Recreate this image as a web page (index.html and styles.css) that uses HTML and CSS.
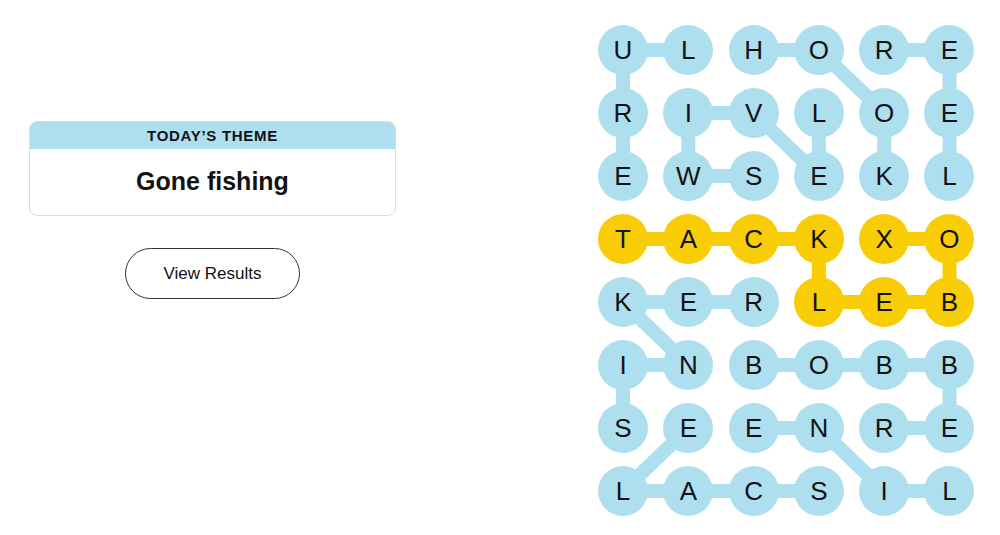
FILE: index.html
```html
<!DOCTYPE html>
<html lang="en">
<head>
    <meta charset="UTF-8">
    <meta name="viewport" content="width=device-width, initial-scale=1.0">
    <title>Strands</title>
    <link rel="stylesheet" href="styles.css">
</head>
<body>
    <div class="page">
        <div class="intro">
            <div class="theme-card">
                <div class="theme-label">Today&rsquo;s Theme</div>
                <div class="theme-name">Gone fishing</div>
            </div>
            <button class="results-btn">View Results</button>
        </div>

        <div class="board">
            <!-- connectors between found letters -->
            <svg class="paths" viewBox="0 0 376.5 491" width="376.5" height="491">
                <polyline class="found" points="90.3,25 25,25 25,151" />
                <polyline class="found" points="155.6,25 220.9,25 286.2,88 286.2,151" />
                <polyline class="found" points="286.2,25 351.5,25 351.5,151" />
                <polyline class="found" points="155.6,151 90.3,151 90.3,88 155.6,88 220.9,151 220.9,88" />
                <polyline class="spangram" points="25,214 220.9,214 220.9,277 351.5,277 351.5,214 286.2,214" />
                <polyline class="found" points="25,403 25,340 90.3,340 25,277 90.3,277 155.6,277" />
                <polyline class="found" points="155.6,340 351.5,340 351.5,403 286.2,403" />
                <polyline class="found" points="220.9,466 25,466 90.3,403" />
                <polyline class="found" points="351.5,466 286.2,466 220.9,403 155.6,403" />
            </svg>

            <div class="grid">
                <div class="cell">U</div><div class="cell">L</div><div class="cell">H</div><div class="cell">O</div><div class="cell">R</div><div class="cell">E</div>
                <div class="cell">R</div><div class="cell">I</div><div class="cell">V</div><div class="cell">L</div><div class="cell">O</div><div class="cell">E</div>
                <div class="cell">E</div><div class="cell">W</div><div class="cell">S</div><div class="cell">E</div><div class="cell">K</div><div class="cell">L</div>
                <div class="cell span">T</div><div class="cell span">A</div><div class="cell span">C</div><div class="cell span">K</div><div class="cell span">X</div><div class="cell span">O</div>
                <div class="cell">K</div><div class="cell">E</div><div class="cell">R</div><div class="cell span">L</div><div class="cell span">E</div><div class="cell span">B</div>
                <div class="cell">I</div><div class="cell">N</div><div class="cell">B</div><div class="cell">O</div><div class="cell">B</div><div class="cell">B</div>
                <div class="cell">S</div><div class="cell">E</div><div class="cell">E</div><div class="cell">N</div><div class="cell">R</div><div class="cell">E</div>
                <div class="cell">L</div><div class="cell">A</div><div class="cell">C</div><div class="cell">S</div><div class="cell">I</div><div class="cell">L</div>
            </div>
        </div>
    </div>
</body>
</html>
```

FILE: styles.css
```css
body {
    margin: 0;
    padding: 0;
    font-family: "Liberation Sans", Arial, sans-serif;
    background: #fff;
    color: #121212;
}

.page {
    display: flex;
    align-items: flex-start;
    padding: 25px 0 0 29px;
}

.intro {
    width: 367px;
    margin-top: 96px;
    display: flex;
    flex-direction: column;
    align-items: center;
}

.theme-card {
    width: 100%;
    box-sizing: border-box;
    border: 1px solid #dcdcdc;
    border-radius: 8px;
    overflow: hidden;
}

.theme-label {
    height: 27px;
    line-height: 28px;
    background: #aedfee;
    text-align: center;
    text-transform: uppercase;
    font-size: 15px;
    font-weight: bold;
    letter-spacing: 0.7px;
}

.theme-name {
    height: 66px;
    line-height: 64px;
    text-align: center;
    font-size: 25px;
    font-weight: bold;
}

.results-btn {
    margin-top: 32px;
    width: 175px;
    height: 51px;
    border: 1px solid #333;
    border-radius: 26px;
    background: #fff;
    color: #121212;
    font-family: "Liberation Sans", Arial, sans-serif;
    font-size: 17px;
    cursor: pointer;
}

.board {
    position: relative;
    margin-left: 202px;
}

.paths {
    position: absolute;
    top: 0;
    left: 0;
    z-index: 0;
}

.paths polyline {
    fill: none;
    stroke-width: 14;
    stroke-linejoin: round;
}

.paths .found {
    stroke: #aedfee;
}

.paths .spangram {
    stroke: #f8cd05;
}

.grid {
    position: relative;
    z-index: 1;
    display: grid;
    grid-template-columns: repeat(6, 50px);
    grid-auto-rows: 50px;
    column-gap: 15.3px;
    row-gap: 13px;
}

.cell {
    display: flex;
    justify-content: center;
    align-items: center;
    border-radius: 50%;
    background: #aedfee;
    font-size: 26px;
}

.cell.span {
    background: #f8cd05;
}
```
